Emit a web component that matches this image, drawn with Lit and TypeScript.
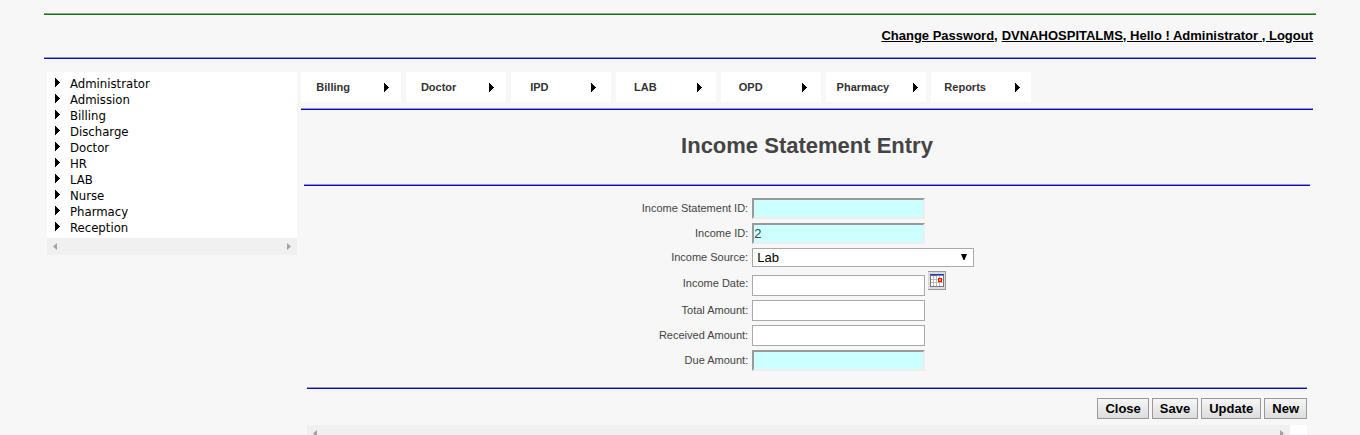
import { LitElement, html, css } from "lit";
import { customElement } from "lit/decorators.js";

const MODULES = ["Administrator", "Admission", "Billing", "Discharge", "Doctor", "HR", "LAB", "Nurse", "Pharmacy", "Reception"];
const TABS = ["Billing", "Doctor", "IPD", "LAB", "OPD", "Pharmacy", "Reports"];
const ACTIONS = ["Close", "Save", "Update", "New"];

const arrow = () => html`<svg class="arrow" width="5" height="9" viewBox="0 0 5 9" aria-hidden="true" shape-rendering="crispEdges">
  <path d="M0 0h1v1h1v1h1v1h1v1h1v1h-1v1h-1v1h-1v1h-1v1h-1z" fill="#000"/></svg>`;

const scrollbar = () => html`<div class="scrollbar" aria-hidden="true">
  <svg width="4" height="7" viewBox="0 0 4 7"><path d="M4 0v7L0 3.5z" fill="#a3a3a3"/></svg>
  <svg width="4" height="7" viewBox="0 0 4 7"><path d="M0 0v7L4 3.5z" fill="#a3a3a3"/></svg>
</div>`;

@customElement("app-root")
export class AppRoot extends LitElement {
  static styles = css`
    :host { display: block; height: 100vh; overflow: hidden; background: #f7f7f7; font-family: "Liberation Sans", Arial, sans-serif; color: #444; }
    * { box-sizing: border-box; }
    a { color: inherit; }
    ul { list-style: none; margin: 0; padding: 0; }
    .page { padding: 13px 44px 0; }
    .rule { height: 2px; margin: 0; border: 0; border-top: 1px solid #9a9a9a; border-bottom: 1px solid #00f; }
    .rule.green { border-bottom-color: #008000; }
    .rule.inset { margin: 0 3px; }
    .account { display: flex; justify-content: flex-end; align-items: center; gap: 4px; height: 42px; padding: 0 3px 2px 0; font-size: 13px; font-weight: bold; color: #000; }
    .columns { display: flex; align-items: flex-start; gap: 4px; padding: 13px 3px 0; }
    .side { flex: 0 0 250px; background: #fff; font: 13px/16px "DejaVu Sans Condensed", Tahoma, sans-serif; color: #000; }
    .side ul { padding: 4px 8px 2px; }
    .side a { display: flex; align-items: center; gap: 10px; text-decoration: none; }
    .side .arrow { margin-bottom: 3px; }
    .scrollbar { display: flex; justify-content: space-between; align-items: center; height: 17px; padding: 0 6px; background: #f0f0f0; }
    .main { flex: 1; min-width: 0; }
    .tabs { display: flex; gap: 5px; padding-bottom: 6px; }
    .tab { display: grid; grid-template-columns: 5fr auto 11fr auto 4fr; align-items: center; width: 100px; height: 30px; background: #fff; font-size: 11px; font-weight: bold; color: #333; text-decoration: none; }
    .tab span { grid-column: 2; }
    .tab .arrow { grid-column: 4; }
    h1 { margin: 0; padding: 22px 0 25px; font-size: 22px; line-height: 27px; text-align: center; }
    .form { display: grid; grid-template-columns: auto auto; justify-content: center; align-items: center; gap: 4px; padding: 12px 0 16px 2px; }
    label { padding-bottom: 2px; font-size: 11px; text-align: right; }
    input { display: block; width: 173px; height: 21px; padding: 1px; border: 1px solid #a9a9a9; background: #fff; font: 13px "Liberation Sans", Arial, sans-serif; color: #444; }
    input[readonly] { border: 2px solid; border-color: #9a9a9a #eee #eee #9a9a9a; background: #cff; padding: 0; }
    .pick { position: relative; display: flex; }
    select { appearance: none; width: 222px; height: 19px; margin: 0; padding: 0 4px; border: 1px solid #a9a9a9; border-radius: 0; background: #fff; font: 13px "Liberation Sans", Arial, sans-serif; color: #000; }
    .caret { position: absolute; right: 7px; top: 6px; pointer-events: none; }
    .date { display: flex; align-items: flex-end; gap: 3px; height: 25px; }
    .calendar { align-self: flex-start; width: 18px; height: 19px; padding: 0; border: 0; background: none; }
    .calendar svg { display: block; }
    .lower { padding: 0 6px; }
    .actions { display: flex; justify-content: flex-end; gap: 3px; padding: 9px 0 6px; }
    .actions button { height: 21px; padding: 0 7px; border: 1px solid #999; background: linear-gradient(#f6f6f6, #ddd); font: bold 13px "Liberation Sans", Arial, sans-serif; color: #000; }
    .results { padding-right: 17px; background: #fff; }
  `;

  render() {
    return html`
      <div class="page">
        <hr class="rule green">
        <nav class="account" aria-label="Account">
          <span><a href="#password">Change Password</a>,</span>
          <a href="#logout">DVNAHOSPITALMS, Hello ! Administrator , Logout</a>
        </nav>
        <hr class="rule">
        <div class="columns">
          <nav class="side" aria-label="Modules">
            <ul>${MODULES.map((m) => html`<li><a href="#${m}">${arrow()}${m}</a></li>`)}</ul>
            ${scrollbar()}
          </nav>
          <main class="main">
            <nav class="tabs" aria-label="Sections">
              ${TABS.map((t) => html`<a class="tab" href="#${t}"><span>${t}</span>${arrow()}</a>`)}
            </nav>
            <hr class="rule">
            <h1>Income Statement Entry</h1>
            <hr class="rule inset">
            <form class="form">
              <label for="statement">Income Statement ID:</label><input id="statement" readonly>
              <label for="income">Income ID:</label><input id="income" readonly value="2">
              <label for="source">Income Source:</label>
              <div class="pick">
                <select id="source"><option>Lab</option></select>
                <svg class="caret" width="6" height="6" viewBox="0 0 6 6" aria-hidden="true"><path d="M0 0h6L3.5 6h-1z" fill="#000"/></svg>
              </div>
              <label for="date">Income Date:</label>
              <div class="date">
                <input id="date">
                <button class="calendar" type="button" aria-label="Pick a date">
                  <svg width="18" height="19" viewBox="0 0 18 19" shape-rendering="crispEdges">
                    <path d="M0 0h18v19H0z" fill="#dcdcdc"/>
                    <path d="M0 0h18v19H0v-1h17V1H0z" fill="#999"/>
                    <path d="M2 3h14v13H2z" fill="#777"/>
                    <path d="M3 5h12v10H3z" fill="#fff"/>
                    <path d="M2 3h14v1H2z" fill="#35359b"/><path d="M3 4h6v1H3z" fill="#4a6fc8"/><path d="M9 4h6v1H9z" fill="#4a90e8"/>
                    <path d="M5 5h1v10H5zM8 5h1v10H8zM11 5h1v10h-1zM3 8h12v1H3zM3 11h12v1H3z" fill="#bbb"/>
                    <path d="M10 7h4v4h-4z" fill="#f00"/><path d="M11 8h2v2h-2z" fill="#fc0"/>
                  </svg>
                </button>
              </div>
              <label for="total">Total Amount:</label><input id="total">
              <label for="received">Received Amount:</label><input id="received">
              <label for="due">Due Amount:</label><input id="due" readonly>
            </form>
            <section class="lower">
              <hr class="rule">
              <div class="actions">${ACTIONS.map((a) => html`<button type="button">${a}</button>`)}</div>
              <div class="results">${scrollbar()}</div>
            </section>
          </main>
        </div>
      </div>`;
  }
}
